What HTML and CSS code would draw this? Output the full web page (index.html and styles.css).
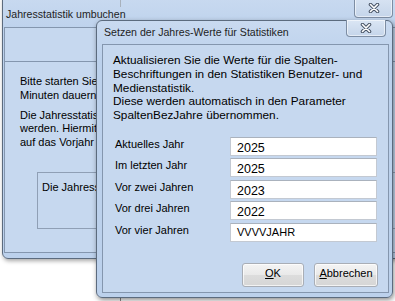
FILE: index.html
```html
<!DOCTYPE html>
<html lang="de">
<head>
    <meta charset="UTF-8">
    <title>Jahresstatistik umbuchen</title>
    <link rel="stylesheet" href="styles.css">
</head>
<body>
    <div id="desktop">
        <span class="behind-line top-line"></span>
        <span class="behind-line bottom-line"></span>

        <!-- Hauptfenster -->
        <div class="window win-back">
            <div class="titlebar">Jahresstatistik umbuchen</div>
            <div class="close-btn">
                <svg width="12" height="10" viewBox="0 0 12 10">
                    <path d="M2.5 1.5 L9.5 8.5 M9.5 1.5 L2.5 8.5" stroke="#4a5668" stroke-width="3.6" stroke-linecap="round"/>
                    <path d="M2.5 1.5 L9.5 8.5 M9.5 1.5 L2.5 8.5" stroke="#ffffff" stroke-width="1.6" stroke-linecap="round"/>
                </svg>
            </div>
            <div class="client">
                <div class="top-panel"></div>
                <div class="info">
                    <p>Bitte starten Sie die Umbuchung erst nach dem Jahreswechsel.<br>Minuten dauern.</p>
                    <p>Die Jahresstatistik wird dabei neu angelegt<br>werden. Hiermit werden die Werte<br>auf das Vorjahr umgebucht.</p>
                    <div class="status-box">Die Jahresstatistik wurde noch nicht umgebucht.</div>
                </div>
            </div>
        </div>

        <!-- Dialog -->
        <div class="window win-dialog">
            <div class="titlebar">Setzen der Jahres-Werte für Statistiken</div>
            <div class="close-btn">
                <svg width="12" height="10" viewBox="0 0 12 10">
                    <path d="M2.5 1.5 L9.5 8.5 M9.5 1.5 L2.5 8.5" stroke="#4a5668" stroke-width="3.6" stroke-linecap="round"/>
                    <path d="M2.5 1.5 L9.5 8.5 M9.5 1.5 L2.5 8.5" stroke="#ffffff" stroke-width="1.6" stroke-linecap="round"/>
                </svg>
            </div>
            <div class="client">
                <p class="intro">Aktualisieren Sie die Werte für die Spalten-<br>Beschriftungen in den Statistiken Benutzer- und<br>Medienstatistik.<br>Diese werden automatisch in den Parameter<br>SpaltenBezJahre übernommen.</p>

                <div class="year-form">
                    <label>Aktuelles Jahr</label>
                    <div class="field">2025</div>
                    <label>Im letzten Jahr</label>
                    <div class="field">2025</div>
                    <label>Vor zwei Jahren</label>
                    <div class="field">2023</div>
                    <label>Vor drei Jahren</label>
                    <div class="field">2022</div>
                    <label>Vor vier Jahren</label>
                    <div class="field small">VVVVJAHR</div>
                </div>

                <div class="buttons">
                    <div class="btn btn-ok"><u>O</u>K</div>
                    <div class="btn btn-cancel"><u>A</u>bbrechen</div>
                </div>
            </div>
        </div>
    </div>
</body>
</html>
```

FILE: styles.css
```css
body {
    margin: 0;
    padding: 0;
    background: #ffffff;
    font-family: "Liberation Sans", Arial, sans-serif;
}

#desktop {
    position: relative;
    width: 395px;
    height: 301px;
    overflow: hidden;
    background: #ffffff;
}

.behind-line {
    position: absolute;
    width: 1px;
    background: #8a8a8a;
}
.top-line {
    left: 120px;
    top: 0;
    height: 7px;
    z-index: 2;
    opacity: 0.5;
}
.bottom-line {
    left: 120px;
    top: 290px;
    height: 11px;
}

/* windows sit on a free desktop */
.window {
    position: absolute;
    box-sizing: border-box;
    border: 1px solid #5c6b7e;
    border-radius: 6px;
    background: linear-gradient(#c9daf0, #bcd1ec 40px, #bcd1ec);
    box-shadow: 1px 2px 4px rgba(0, 0, 0, 0.35);
}

.titlebar {
    font-family: "Liberation Sans", Arial, sans-serif;
    font-size: 10.6px;
    line-height: 14px;
    color: #1e1e1e;
    white-space: nowrap;
}

.close-btn {
    position: absolute;
    box-sizing: border-box;
    display: flex;
    align-items: center;
    justify-content: center;
    border: 1px solid #7d8da3;
    border-top: none;
    border-radius: 0 0 4px 4px;
    background: linear-gradient(#dbe6f4, #c5d5ea);
    box-shadow: inset 0 0 0 1px rgba(255, 255, 255, 0.55);
}

.client {
    box-sizing: border-box;
    border: 1px solid #8496ae;
    background: #c6d8ef;
    color: #000000;
    font-size: 11px;
}

/* Hauptfenster */
.win-back {
    left: 2px;
    top: -6px;
    width: 400px;
    height: 265px;
    z-index: 1;
}
.win-back .titlebar {
    padding: 12px 0 6px 3px;
}
.win-back .close-btn {
    right: 8px;
    top: 0;
    width: 39px;
    height: 23px;
    padding-top: 4px;
}
.win-back .client {
    margin: 0 1px;
    height: 226px;
}
.top-panel {
    height: 33px;
    border-bottom: 1px solid #8496ae;
}
.info {
    padding: 13px 0 0 15px;
}
.info p {
    margin: 0 0 6.5px;
    line-height: 13.5px;
    white-space: nowrap;
}
.status-box {
    box-sizing: border-box;
    margin: 23px 0 0 17px;
    height: 57px;
    padding: 8px 0 0 4px;
    border: 1px solid #8f9fb5;
    line-height: 13px;
    white-space: nowrap;
}

/* Dialog */
.win-dialog {
    left: 96px;
    top: 20px;
    width: 297px;
    height: 278px;
    z-index: 3;
    box-shadow: 1px 2px 5px rgba(0, 0, 0, 0.45);
}
.win-dialog .titlebar {
    padding: 4px 0 5px 7px;
}
.win-dialog .close-btn {
    right: 6px;
    top: -1px;
    width: 40px;
    height: 17px;
}
.win-dialog .client {
    margin: 0 3px 0 5px;
    height: 249px;
    padding: 9px 10px 0 10px;
}
.intro {
    margin: 0;
    font-size: 11.8px;
    line-height: 13.75px;
    white-space: nowrap;
}

.year-form {
    display: grid;
    grid-template-columns: 115px 147px;
    grid-auto-rows: 19px;
    row-gap: 2.5px;
    margin: 14px 0 0 2px;
}
.year-form label {
    line-height: 14px;
    white-space: nowrap;
}
.field {
    box-sizing: border-box;
    background: #ffffff;
    border: 1px solid #c3c9d2;
    border-top-color: #aab2bd;
    padding: 2px 0 0 6px;
    font-size: 12.5px;
    line-height: 17px;
}
.field.small {
    font-size: 11px;
    padding-top: 0;
}

.buttons {
    display: flex;
    justify-content: flex-end;
    gap: 10px;
    margin-top: 21px;
}
.btn {
    box-sizing: border-box;
    height: 24px;
    display: flex;
    align-items: center;
    justify-content: center;
    padding-bottom: 3px;
    border: 1px solid #a9aeb6;
    border-radius: 3px;
    background: linear-gradient(#f4f4f4, #e9e9e9 50%, #dcdcdc 51%, #d6d6d6);
    box-shadow: inset 0 0 0 1px rgba(255, 255, 255, 0.7);
    font-size: 11px;
    color: #000000;
}
.btn-ok {
    width: 62px;
}
.btn-cancel {
    width: 64px;
}
```
